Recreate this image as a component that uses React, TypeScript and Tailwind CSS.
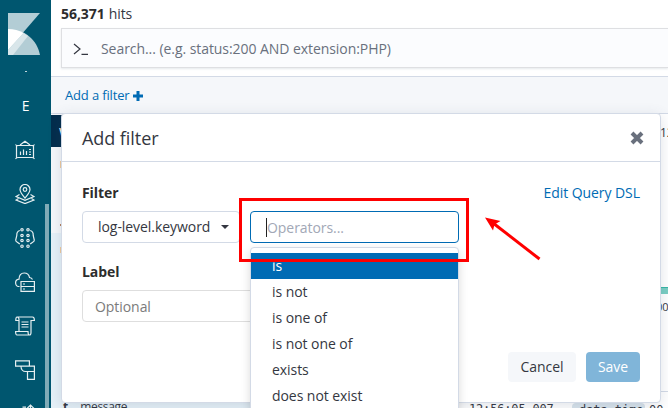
import React from "react";

const operators = ["is", "is not", "is one of", "is not one of", "exists", "does not exist"];

function Logo() {
  return (
    <svg className="mt-[13px] h-[42px] w-8 shrink-0" viewBox="0 0 32 42">
      <path d="M0 0H32L0 37Z" fill="#b3cdd5" />
      <path d="M0 16C17 16 29 27 32 42H0Z" fill="#b3cdd5" />
      <path d="M0 16C6 16 11 17.5 15.5 20L0 37Z" fill="#fff" />
      <path d="M15.5 20L20 23L5 42H0V37Z" fill="#d9e6ea" />
    </svg>
  );
}

function NavIcon({ children }: { children: React.ReactNode }) {
  return (
    <svg className="h-5 w-5 shrink-0" viewBox="0 0 20 20" fill="none" stroke="#e6eff1" strokeWidth="1.2">
      {children}
    </svg>
  );
}

function Sidebar() {
  return (
    <nav className="relative flex h-full w-[51px] shrink-0 flex-col items-center bg-[#00566f] text-white">
      <div className="flex w-full pl-2"><Logo /></div>
      <div className="mt-4 h-px w-[2px] shrink-0 bg-[#c0d5dc]" />
      <div className="mt-[22px] h-6 shrink-0 text-sm leading-6">E</div>
      <div className="mt-[22px] flex flex-col gap-6 self-start pl-[15px]">
        <NavIcon>
          <path d="M5 5L10 1.2L15 5M.5 4.5Q1.5 6 3 5.5H17Q18.5 6 19.5 4.5M1.5 5.5V18M18.5 5.5V18M.5 19Q1.5 17.5 3 17.5H17Q18.5 17.5 19.5 19" />
          <path d="M5.5 11.5V15M8.5 9.5V15M11.5 11V15M14 9.5H16M14 12H16M14 14.5H16" />
        </NavIcon>
        <NavIcon>
          <path d="M10 14C7 10.5 5 8.3 5 5.5A5 5 0 0 1 15 5.5C15 8.3 13 10.5 10 14Z" />
          <circle cx="10" cy="5.5" r="1.8" />
          <path d="M4.5 10.5L1 12.5L10 16.3L19 12.5L15.5 10.5M3.5 14.5L1 16L10 19.6L19 16L16.5 14.5" />
        </NavIcon>
        <NavIcon>
          <circle cx="7" cy="1.8" r="1.2" /><circle cx="13" cy="1.8" r="1.2" />
          <circle cx="7" cy="7.5" r="1.2" /><circle cx="13" cy="7.5" r="1.2" />
          <circle cx="7" cy="12.5" r="1.2" /><circle cx="13" cy="12.5" r="1.2" />
          <circle cx="7" cy="18.2" r="1.2" /><circle cx="13" cy="18.2" r="1.2" />
          <path d="M4.8 2.5Q1.5 3.5 1.8 7.5L.7 12Q.7 13.5 2 14L4.8 16M15.2 2.5Q18.5 3.5 18.2 7.5L19.3 12Q19.3 13.5 18 14L15.2 16" />
        </NavIcon>
        <NavIcon>
          <path d="M4.5 14.5H3.5C1.8 14.5.6 12.5.6 10.8C.6 8.8 2 7.5 4 7.2C4 3.5 6 1 9.2 1C12 1 14 2.8 14.5 5.5C16 5.8 17 6.5 17.5 7.5" />
          <path d="M6 9.5H19.4V19.4H6ZM6 14.5H19.4M8 12H10M8 17H10" />
        </NavIcon>
        <NavIcon>
          <path d="M4 15.5V3.5C4 1.8 3 1 2 1C1 1 .8 2 .8 4.5H4M2 1H17.5C19 1 19.4 2 19.4 4.5H16V16.5C16 18 15.5 19 14.5 19H2C.8 19 .6 18 .6 15.5H13C13 18 13.5 19 14.5 19" />
          <path d="M6.5 6H13.5M6.5 8.5H13.5M6.5 11H13.5" />
        </NavIcon>
        <NavIcon>
          <path d="M.6.8H14.4V6.2H.6ZM6 6.2H19.4V11.5H10.5C8 11.5 6 9.5 6 6.2M12.5 11.5H19.4V19.3H12.5Z" />
        </NavIcon>
        <NavIcon><path d="M15.5 1V12M12 4.5L15.5 1L19 4.5M7.5 3.2H11" /></NavIcon>
      </div>
      <div className="absolute top-[204px] left-[45px] h-[204px] w-1 bg-[#80abb7]" />
    </nav>
  );
}

function SearchBar() {
  return (
    <div className="ml-[10px] flex h-10 shrink-0 items-center border border-r-0 border-[#dedfe2] bg-[#fbfcfe] pt-px shadow-[0_1px_2px_rgba(152,162,179,0.25)]">
      <svg className="ml-[11px] h-4 w-4" viewBox="0 0 16 16" fill="none" stroke="#343741" strokeWidth="1.2">
        <path d="M1 3L7 8L1 13M8.5 13.4H15" />
      </svg>
      <span className="ml-3 text-sm text-[#69707d]">Search... (e.g. status:200 AND extension:PHP)</span>
    </div>
  );
}

function OperatorSelect() {
  return (
    <div className="relative w-[209px]">
      <div className="flex h-8 items-center rounded-[4px] border border-[#006bb4] bg-white pl-[15px]">
        <span className="h-[19px] w-px bg-[#222]" />
        <span className="pt-px text-sm text-[#a2a8b6]">Operators...</span>
      </div>
      <ul className="absolute top-9 left-0 w-full rounded-[4px] border border-[#d3dae6] bg-white py-[5px] text-sm text-[#343741] shadow-[0_4px_10px_rgba(0,0,0,0.15)]">
        {operators.map((name, i) => (
          <li key={name} className={i === 0 ? "h-[26px] bg-[#006bb4] pl-[21px] leading-[26px] text-white" : "h-[26px] pl-[21px] leading-[26px]"}>
            {name}
          </li>
        ))}
      </ul>
      <div className="absolute top-[-13px] left-[-11px] h-16 w-[230px] border-3 border-[#fe0000]" />
    </div>
  );
}

function FilterDialog() {
  return (
    <section className="absolute top-[113px] left-[61px] flex h-[290px] w-[600px] flex-col rounded-[4px] border border-[#d3dae6] bg-white text-[#343741] shadow-[0_3px_14px_rgba(60,80,110,0.16)]">
      <header className="flex h-12 shrink-0 items-center justify-between border-b border-[#d3dae6] pr-4 pl-5">
        <h2 className="text-lg">Add filter</h2>
        <svg className="h-[14px] w-[14px]" viewBox="0 0 14 14" stroke="#69707d" strokeWidth="4">
          <path d="M2 2L12 12M12 2L2 12" />
        </svg>
      </header>
      <div className="flex flex-1 flex-col px-5">
        <div className="mt-[21px] flex h-5 items-center justify-between text-sm">
          <b className="font-bold text-[#2d2d2d]">Filter</b>
          <a className="text-[#006bb4]">Edit Query DSL</a>
        </div>
        <div className="mt-2 flex gap-[10px]">
          <div className="flex h-8 w-[158px] items-center justify-between rounded-[4px] border border-[#d3dae6] pr-[10px] pl-[15px] text-sm">
            <span>log-level.keyword</span>
            <span className="border-x-4 border-t-4 border-x-transparent border-t-[#343741]" />
          </div>
          <OperatorSelect />
        </div>
        <b className="mt-[19px] h-5 text-sm font-bold text-[#2d2d2d]">Label</b>
        <div className="mt-2 flex h-8 w-[320px] items-center rounded-[4px] border border-[#dedede] pt-px pl-3 text-sm text-[#7b7b7b]">Optional</div>
        <div className="mt-[30px] flex justify-end gap-[10px] text-sm">
          <button className="h-[30px] w-[68px] rounded-[4px] bg-[#f5f7fa]">Cancel</button>
          <button className="h-[30px] w-[54px] rounded-[4px] bg-[#80b5d9] text-white">Save</button>
        </div>
      </div>
      <svg className="absolute top-[99px] left-[420px] h-[50px] w-[65px]" viewBox="0 0 65 50">
        <path d="M57.5 46L11 10" stroke="#f00" strokeWidth="3" />
        <path d="M3 4.5L18.5 8L12.5 11.5L11 17.5Z" fill="#f00" />
      </svg>
    </section>
  );
}

function Discover() {
  return (
    <main className="flex min-w-0 flex-1 flex-col">
      <div className="flex h-7 shrink-0 items-center pl-[10px] text-sm text-[#343741]"><b className="mr-1 text-[#2d2d2d]">56,371</b>hits</div>
      <SearchBar />
      <div className="mt-2 flex h-[38px] shrink-0 items-center gap-[3px] border-y border-[#d3dae6] bg-[#f5f7fa] pt-px pl-[14px] text-[13px] text-[#006bb4]">
        <span className="tracking-[-0.15px]">Add a filter</span>
        <svg className="h-[10px] w-[10px]" viewBox="0 0 10 10" stroke="#006bb4" strokeWidth="3"><path d="M5 0V10M0 5H10" /></svg>
      </div>
      <div className="flex h-[294px] shrink-0">
        <aside className="flex w-[215px] shrink-0 flex-col bg-[#f5f7fa]">
          <div className="mt-px h-8 shrink-0 bg-[#032d4c] pl-2 text-sm leading-9 text-white">W</div>
          <div className="flex h-[86px] shrink-0 flex-col pl-[9px]">
            <span className="mt-[14px] h-[7px] w-px bg-[#efc99c]" />
            <span className="mt-14 h-[2px] w-px bg-[#b5805c]" />
          </div>
          <div className="h-[175px] shrink-0 bg-[#e6f1f8] pl-[9px] text-[12px] text-[#343741]">
            <div className="mt-[14px] h-[6px] w-px bg-[#efc99c]" />
            <div className="mt-[146px] pl-[3px] leading-4 whitespace-nowrap"><b className="mr-3">t</b><span className="tracking-[-0.3px]">message</span></div>
          </div>
        </aside>
        <div className="flex w-[402px] shrink-0 flex-col text-[#343741]">
          <div className="mt-[9px] h-5 shrink-0 pl-[394px] text-xs leading-5">12</div>
          <div className="mt-[144px] h-[7px] w-2 shrink-0 self-end border-t border-[#36b5a5] bg-[#7acec3]" />
          <div className="mt-[7px] h-3 shrink-0 pl-[390px] text-[11px] leading-3">00</div>
          <div className="mt-[78px] h-px shrink-0 bg-[#d3dae6]" />
          <div className="mt-[11px] flex shrink-0 items-start pl-[203px] font-['DejaVu_Sans_Mono'] text-xs leading-3 whitespace-nowrap">
            <span className="w-[103px] tracking-[-0.17px]">12:56:05.007</span>
            <span className="mr-1 w-[73px] rounded bg-[#d9e4ec] pl-[7px] leading-[14px]">data.time</span>
            <span className="leading-[14px]">00</span>
          </div>
        </div>
      </div>
    </main>
  );
}

export default function App() {
  return (
    <div className="relative flex h-[408px] w-[668px] overflow-hidden bg-white font-['Open_Sans','Noto_Sans',sans-serif] tracking-[-0.06px]">
      <Sidebar />
      <Discover />
      <FilterDialog />
    </div>
  );
}
